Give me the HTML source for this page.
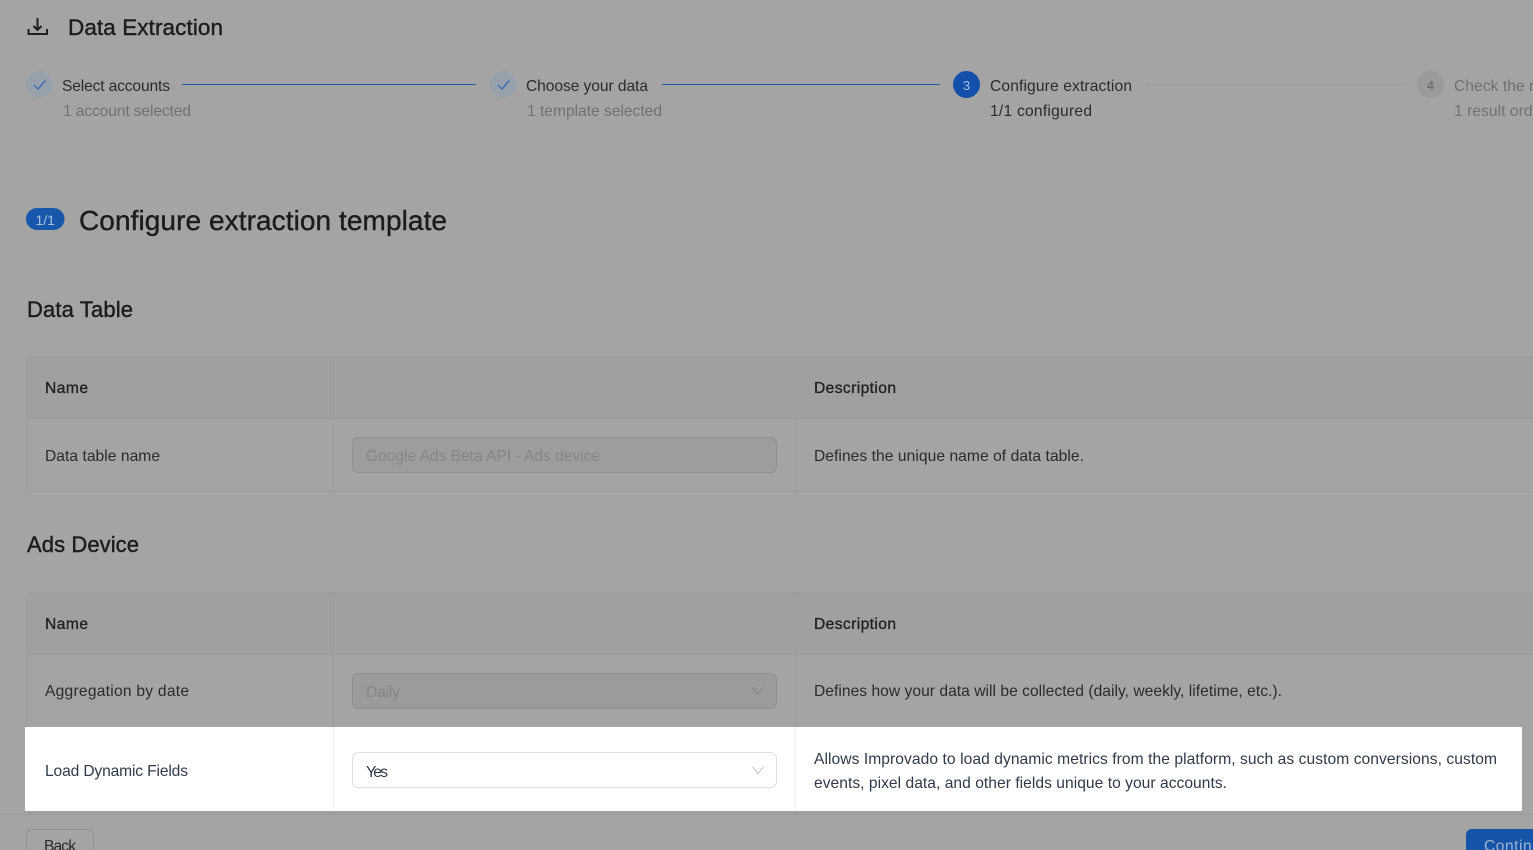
<!DOCTYPE html>
<html lang="en">
<head>
<meta charset="utf-8">
<title>Data Extraction</title>
<style>
html,body{margin:0;padding:0;width:1533px;height:850px;overflow:hidden;background:#a4a4a4}
svg{display:block;position:absolute;left:0;top:0}
text{font-family:"Liberation Sans",sans-serif;font-size:15.6px;fill:#2b2b2e;white-space:pre}
.h{fill:#1c1c1e;stroke:#1c1c1e;stroke-width:.4}
.b{fill:#222;stroke:#222;stroke-width:.35}
.m{fill:#727172}
.d{fill:#868686}
.w{fill:#2f3a4a}
</style>
</head>
<body>
<svg width="1533" height="850" viewBox="0 0 1533 850" xmlns="http://www.w3.org/2000/svg">
<rect width="1533" height="850" fill="#a4a4a4"/>

<!-- header -->
<path d="M37.5 18V30M33.5 26l4 4 4-4M28.500 29v5h18.500v-5" fill="none" stroke="#1f1f1f" stroke-width="2"/>
<text class="h" x="68" y="35" style="font-size:22.5px" textLength="155">Data Extraction</text>

<!-- stepper -->
<circle cx="39.500" cy="84.500" r="13.500" fill="#97a1ac"/>
<path d="M34 85l4 4 7.500-8.500" fill="none" stroke="#2a62b5" stroke-width="1.200"/>
<text x="62" y="91" textLength="108">Select accounts</text>
<text class="m" x="63" y="116" textLength="128">1 account selected</text>
<rect x="182" y="84" width="294" height="1" fill="#1f5cb0"/>

<circle cx="503.500" cy="84.500" r="13.500" fill="#97a1ac"/>
<path d="M498 85l4 4 7.500-8.500" fill="none" stroke="#2a62b5" stroke-width="1.200"/>
<text x="526" y="91" textLength="122">Choose your data</text>
<text class="m" x="527" y="116" textLength="135">1 template selected</text>
<rect x="662" y="84" width="278" height="1" fill="#1f5cb0"/>

<circle cx="966.500" cy="84.500" r="13.500" fill="#1250ac"/>
<text x="966.500" y="90" text-anchor="middle" style="font-size:13px;fill:#a9bedd">3</text>
<text x="990" y="91" textLength="142">Configure extraction</text>
<text x="990" y="116" textLength="102">1/1 configured</text>
<rect x="1146" y="84" width="259" height="1" fill="#9a9a9a"/>

<circle cx="1430.500" cy="84.500" r="13.500" fill="#9a9a9a"/>
<text x="1430.500" y="90" text-anchor="middle" style="font-size:13px;fill:#666">4</text>
<text class="m" x="1454" y="91" style="letter-spacing:.05px">Check the results</text>
<text class="m" x="1454" y="116" style="letter-spacing:.05px">1 result ordered</text>

<!-- title -->
<rect x="26" y="208" width="38.500" height="22" rx="11" fill="#1858ac"/>
<text x="45.200" y="225" text-anchor="middle" style="font-size:14px;fill:#a9c0e0">1/1</text>
<text class="h" x="79" y="230" style="font-size:28px" textLength="368">Configure extraction template</text>

<!-- Data Table -->
<text class="h" x="27" y="317" style="font-size:22px" textLength="106">Data Table</text>
<path d="M1533 356.500H33a6 6 0 0 0-6 6V418H1533Z" fill="#a0a0a0"/>
<path d="M1533 356.500H33a6 6 0 0 0-6 6V491.500H1533" fill="none" stroke="#9b9b9b"/>
<path d="M27 418.500H1533M333.500 357V491M795.500 357V491" fill="none" stroke="#9b9b9b"/>
<text class="b" x="45" y="393" textLength="43">Name</text>
<text class="b" x="814" y="393" textLength="82">Description</text>
<text x="45" y="461" textLength="115">Data table name</text>
<rect x="352.500" y="437.500" width="424" height="35" rx="6" fill="#9d9d9d" stroke="#909090"/>
<text class="d" x="366" y="461" textLength="234">Google Ads Beta API - Ads device</text>
<text x="814" y="461" textLength="270">Defines the unique name of data table.</text>

<!-- Ads Device -->
<text class="h" x="27" y="552" style="font-size:22px" textLength="112">Ads Device</text>
<path d="M1533 592.500H33a6 6 0 0 0-6 6V654H1533Z" fill="#a0a0a0"/>
<path d="M1533 592.500H33a6 6 0 0 0-6 6V727" fill="none" stroke="#9b9b9b"/>
<path d="M27 654.500H1533M333.500 593V814M795.500 593V814" fill="none" stroke="#9b9b9b"/>
<text class="b" x="45" y="629" textLength="43">Name</text>
<text class="b" x="814" y="629" textLength="82">Description</text>
<text x="45" y="696" textLength="144">Aggregation by date</text>
<rect x="352.500" y="673.500" width="424" height="35" rx="6" fill="#9b9b9b" stroke="#8e8e8e"/>
<text class="d" x="366" y="697" textLength="34">Daily</text>
<path d="M752.500 687.500l5.500 6.500 5.500-6.500" fill="none" stroke="#858585"/>
<text x="814" y="696" textLength="468">Defines how your data will be collected (daily, weekly, lifetime, etc.).</text>

<!-- highlighted row -->
<rect x="25" y="727" width="1497" height="84" fill="#fff"/>
<path d="M333.500 727V811M795.500 727V811" fill="none" stroke="#efefef"/>
<text class="w" x="45" y="776" textLength="143">Load Dynamic Fields</text>
<rect x="352.500" y="752.500" width="424" height="35" rx="6" fill="#fff" stroke="#dfdfdf"/>
<text class="w" x="366" y="777" textLength="22">Yes</text>
<path d="M752.500 767l5.500 6.500 5.500-6.500" fill="none" stroke="#c4c4c4"/>
<text class="w" x="814" y="764" textLength="683">Allows Improvado to load dynamic metrics from the platform, such as custom conversions, custom</text>
<text class="w" x="814" y="788" textLength="413">events, pixel data, and other fields unique to your accounts.</text>

<!-- footer -->
<rect x="0" y="811" width="25" height="3" fill="#a4a4a4"/>
<rect x="25" y="811" width="1497" height="3" fill="#9f9f9f"/>
<rect x="0" y="814" width="1533" height="1" fill="#9b9b9b"/>
<rect x="26.500" y="829.500" width="67" height="40" rx="6" fill="#a4a4a4" stroke="#8e8e8e"/>
<text x="44" y="851" textLength="32">Back</text>
<rect x="1466" y="829" width="90" height="40" rx="6" fill="#1554a8"/>
<text x="1484" y="851" style="fill:#9fb4cf" textLength="66">Continue</text>
</svg>
</body>
</html>
